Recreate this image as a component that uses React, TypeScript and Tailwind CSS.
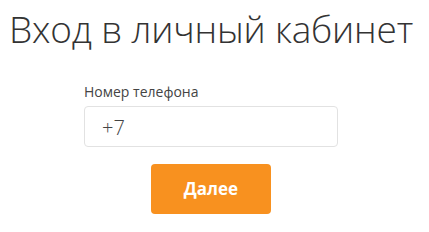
import React from 'react';

export default function App() {
  return (
    <div className="min-h-screen bg-white pr-[7px]" style={{ fontFamily: '"Open Sans", "Noto Sans", sans-serif' }}>
      <div className="flex flex-col items-center">
        <h1 className="mt-[7px] text-[37px] leading-[44px] font-light text-[#333] tracking-[-0.2px]">
          Вход в личный кабинет
        </h1>
        <div className="mt-[32px] w-[254px]">
          <label className="block text-[14px] leading-[18px] text-[#444]">Номер телефона</label>
          <div className="mt-[5px] h-[41px] rounded-[4px] border border-[#e2e2e2] flex items-center px-[17px] pt-[3px]">
            <span className="text-[20px] font-light text-[#444]">+7</span>
          </div>
        </div>
        <button className="mt-[17px] w-[120px] h-[50px] rounded-[4px] bg-[#f8911f] text-white font-bold text-[17px]">
          Далее
        </button>
      </div>
    </div>
  );
}
